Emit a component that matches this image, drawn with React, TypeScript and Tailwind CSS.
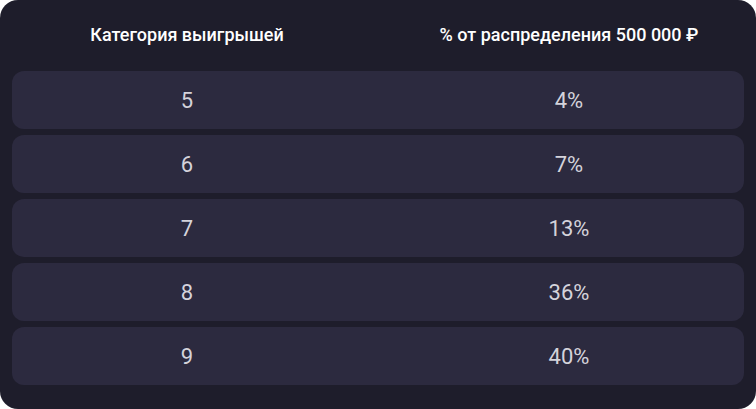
import React from 'react';

const rows = [
  { cat: '5', pct: '4%' },
  { cat: '6', pct: '7%' },
  { cat: '7', pct: '13%' },
  { cat: '8', pct: '36%' },
  { cat: '9', pct: '40%' },
];

export default function App() {
  return (
    <div className="w-[756px] h-[409px] bg-white font-['Roboto',sans-serif]">
      <div className="h-full rounded-[18px] bg-[#1e1d2b] px-3 pb-6">
        <div className="grid h-[71px] grid-cols-2 items-center gap-8 pb-[2px] text-[18px] font-medium text-white">
          <div className="text-center">Категория выигрышей</div>
          <div className="text-center">% от распределения 500 000 ₽</div>
        </div>
        <div className="flex flex-col gap-[6px]">
          {rows.map((r) => (
            <div
              key={r.cat}
              className="grid h-[58px] grid-cols-2 items-center gap-8 rounded-xl bg-[#2c2a3f] text-[22px] text-[#d4d3db]"
            >
              <div className="text-center">{r.cat}</div>
              <div className="text-center">{r.pct}</div>
            </div>
          ))}
        </div>
      </div>
    </div>
  );
}
